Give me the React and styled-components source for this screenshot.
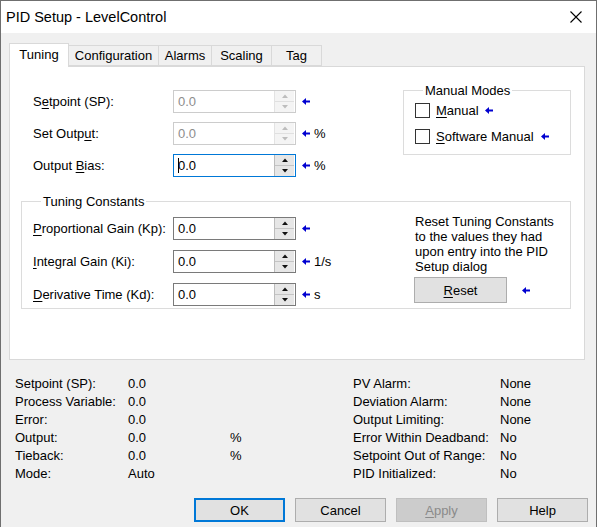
import React from 'react';
import styled, { createGlobalStyle } from 'styled-components';

const GlobalStyle = createGlobalStyle`
	html, body {
		margin: 0;
		padding: 0;
		background: #f0f0f0;
	}
`;

function BlueArrow() {
	return (
		<svg width="8" height="7" viewBox="0 0 8 7">
			<polygon points="0,3.5 4,0 4,7" fill="#0000d0" />
			<rect x="3" y="2.5" width="5" height="2" fill="#0000d0" />
		</svg>
	);
}

function Triangle({ up, color }) {
	return (
		<svg width="6" height="4" viewBox="0 0 6 4">
			<polygon points={up ? '0,4 3,0.5 6,4' : '0,0 6,0 3,3.5'} fill={color} />
		</svg>
	);
}

function SpinBox({ value, disabled, focused }) {
	const tri = disabled ? '#bdbdbd' : '#111';
	return (
		<Spin $disabled={disabled} $focused={focused}>
			<SpinText $disabled={disabled}>
				{focused && <Caret />}
				{value}
			</SpinText>
			<SpinButtons $disabled={disabled}>
				<SpinHalf $disabled={disabled}>
					<Triangle up color={tri} />
				</SpinHalf>
				<SpinHalf $disabled={disabled} $bottom>
					<Triangle color={tri} />
				</SpinHalf>
			</SpinButtons>
		</Spin>
	);
}

function FormRow({ label, value, unit, disabled, focused }) {
	return (
		<Row>
			<Label>{label}</Label>
			<SpinBox value={value} disabled={disabled} focused={focused} />
			<ArrowWrap>
				<BlueArrow />
			</ArrowWrap>
			{unit && <Unit>{unit}</Unit>}
		</Row>
	);
}

export default function App() {
	return (
		<>
			<GlobalStyle />
			<Window>
				<TitleBar>
					<Title>PID Setup - LevelControl</Title>
					<svg width="12" height="12" viewBox="0 0 12 12">
						<path d="M0.5 0.5 L11.5 11.5 M11.5 0.5 L0.5 11.5" stroke="#000" strokeWidth="1.1" />
					</svg>
				</TitleBar>
				<Body>
					<TabStrip>
						<Tab $active $width={60}>Tuning</Tab>
						<Tab $width={90}>Configuration</Tab>
						<Tab $width={53}>Alarms</Tab>
						<Tab $width={60}>Scaling</Tab>
						<Tab $width={50}>Tag</Tab>
					</TabStrip>
					<Panel>
						<TopSection>
							<TopForm>
								<FormRow
									label={<>S<U>e</U>tpoint (SP):</>}
									value="0.0"
									disabled
								/>
								<FormRow
									label={<>Set Outp<U>u</U>t:</>}
									value="0.0"
									unit="%"
									disabled
								/>
								<FormRow
									label={<>Output <U>B</U>ias:</>}
									value="0.0"
									unit="%"
									focused
								/>
							</TopForm>
							<ManualBox>
								<Legend>Manual Modes</Legend>
								<Checks>
									<CheckRow>
										<CheckBox />
										<CheckLabel><U>M</U>anual</CheckLabel>
										<ArrowWrap $gap={6}>
											<BlueArrow />
										</ArrowWrap>
									</CheckRow>
									<CheckRow>
										<CheckBox />
										<CheckLabel><U>S</U>oftware Manual</CheckLabel>
										<ArrowWrap $gap={7}>
											<BlueArrow />
										</ArrowWrap>
									</CheckRow>
								</Checks>
							</ManualBox>
						</TopSection>
						<TuningBox>
							<Legend>Tuning Constants</Legend>
							<TuningInner>
								<Form $gap={10}>
									<FormRow label={<><U>P</U>roportional Gain (Kp):</>} value="0.0" />
									<FormRow label={<><U>I</U>ntegral Gain (Ki):</>} value="0.0" unit="1/s" />
									<FormRow label={<><U>D</U>erivative Time (Kd):</>} value="0.0" unit="s" />
								</Form>
								<ResetColumn>
									<ResetText>
										Reset Tuning Constants to the values they had upon entry into the PID Setup dialog
									</ResetText>
									<ResetRow>
										<Button $width={93} $height={26}>
											<U>R</U>eset
										</Button>
										<ArrowWrap $gap={15}>
											<BlueArrow />
										</ArrowWrap>
									</ResetRow>
								</ResetColumn>
							</TuningInner>
						</TuningBox>
					</Panel>
				</Body>
				<Status>
					<StatusGrid $cols="113px 102px 40px" $width={338}>
						<span>Setpoint (SP):</span><span>0.0</span><span />
						<span>Process Variable:</span><span>0.0</span><span />
						<span>Error:</span><span>0.0</span><span />
						<span>Output:</span><span>0.0</span><span>%</span>
						<span>Tieback:</span><span>0.0</span><span>%</span>
						<span>Mode:</span><span>Auto</span><span />
					</StatusGrid>
					<StatusGrid $cols="147px auto">
						<span>PV Alarm:</span><span>None</span>
						<span>Deviation Alarm:</span><span>None</span>
						<span>Output Limiting:</span><span>None</span>
						<span>Error Within Deadband:</span><span>No</span>
						<span>Setpoint Out of Range:</span><span>No</span>
						<span>PID Initialized:</span><span>No</span>
					</StatusGrid>
				</Status>
				<ButtonBar>
					<Button $primary>OK</Button>
					<Button>Cancel</Button>
					<Button disabled>
						<U>A</U>pply
					</Button>
					<Button>Help</Button>
				</ButtonBar>
			</Window>
		</>
	);
}

const Window = styled.div`
	width: 597px;
	height: 527px;
	box-sizing: border-box;
	border: 1px solid #6f6f6f;
	border-bottom: none;
	background: #f0f0f0;
	display: flex;
	flex-direction: column;
	font-family: 'Liberation Sans', Arial, sans-serif;
	font-size: 13px;
	color: #000;
	overflow: hidden;
`;

const TitleBar = styled.div`
	height: 32px;
	flex-shrink: 0;
	background: #fff;
	display: flex;
	align-items: center;
	justify-content: space-between;
	padding: 0 14px 0 5px;
`;

const Title = styled.div`
	font-size: 14.5px;
`;

const Body = styled.div`
	display: flex;
	flex-direction: column;
	padding: 10px 11px 0 8px;
`;

const TabStrip = styled.div`
	display: flex;
	align-items: flex-end;
`;

const Tab = styled.div`
	width: ${(p) => p.$width}px;
	height: ${(p) => (p.$active ? 24 : 21)}px;
	box-sizing: border-box;
	display: flex;
	align-items: center;
	justify-content: center;
	padding-bottom: ${(p) => (p.$active ? 3 : 0)}px;
	border: 1px solid #d9d9d9;
	border-bottom: ${(p) => (p.$active ? 'none' : '1px solid #d9d9d9')};
	border-left: ${(p) => (p.$active ? '1px solid #d9d9d9' : 'none')};
	background: ${(p) => (p.$active ? '#fff' : '#f0f0f0')};
	margin-bottom: ${(p) => (p.$active ? -1 : 0)}px;
	position: relative;
	z-index: ${(p) => (p.$active ? 1 : 0)};
`;

const Panel = styled.div`
	width: 576px;
	height: 294px;
	box-sizing: border-box;
	background: #fff;
	border: 1px solid #d9d9d9;
	padding: 16px 13px 0 11px;
`;

const TopSection = styled.div`
	display: flex;
	justify-content: space-between;
	align-items: flex-start;
`;

const Form = styled.div`
	display: flex;
	flex-direction: column;
	gap: ${(p) => p.$gap || 9}px;
`;

const TopForm = styled(Form)`
	margin: 7px 0 0 12px;
`;

const Row = styled.div`
	display: flex;
	align-items: center;
	height: 23px;
`;

const Label = styled.div`
	width: 140px;
	white-space: nowrap;
`;

const U = styled.span`
	text-decoration: underline;
	text-underline-offset: 2px;
`;

const Spin = styled.div`
	width: 123px;
	height: 23px;
	box-sizing: border-box;
	display: flex;
	background: #fff;
	border: 1px solid
		${(p) => (p.$focused ? '#0078d7' : p.$disabled ? '#cccccc' : '#7a7a7a')};
`;

const SpinText = styled.div`
	flex: 1;
	display: flex;
	align-items: center;
	padding-left: 4px;
	color: ${(p) => (p.$disabled ? '#8d8d8d' : '#000')};
`;

const Caret = styled.span`
	display: inline-block;
	width: 1px;
	height: 15px;
	background: #000;
	margin-right: -1px;
`;

const SpinButtons = styled.div`
	width: 19px;
	margin: 0 1px 0 0;
	display: flex;
	flex-direction: column;
	border-left: 1px solid ${(p) => (p.$disabled ? '#e3e3e3' : '#bcbcbc')};
`;

const SpinHalf = styled.div`
	flex: 1;
	display: flex;
	align-items: center;
	justify-content: center;
	background: ${(p) => (p.$disabled ? '#f4f4f4' : '#e6e6e6')};
	border-top: ${(p) =>
		p.$bottom ? `1px solid ${p.$disabled ? '#e0e0e0' : '#c4c4c4'}` : 'none'};
`;

const ArrowWrap = styled.span`
	display: flex;
	align-items: center;
	margin-left: ${(p) => p.$gap || 6}px;
`;

const Unit = styled.span`
	margin-left: 4px;
`;

const Fieldset = styled.fieldset`
	margin: 0;
	min-width: 0;
	border: 1px solid #dcdcdc;
`;

const Legend = styled.legend`
	padding: 0 2px;
	margin-left: 8px;
	line-height: 15px;
`;

const ManualBox = styled(Fieldset)`
	width: 168px;
	box-sizing: border-box;
	padding: 5px 0 10px 11px;
`;

const Checks = styled.div`
	display: flex;
	flex-direction: column;
	gap: 11px;
`;

const CheckRow = styled.div`
	display: flex;
	align-items: center;
	height: 15px;
`;

const CheckBox = styled.span`
	width: 13px;
	height: 13px;
	border: 1px solid #333;
	background: #fff;
`;

const CheckLabel = styled.span`
	margin-left: 6px;
`;

const TuningBox = styled(Fieldset)`
	margin-top: 17px;
	padding: 8px 0 2px 11px;
`;

const TuningInner = styled.div`
	display: flex;
	align-items: flex-start;
`;

const ResetColumn = styled.div`
	margin-left: auto;
	width: 155px;
	margin-top: -3px;
	display: flex;
	flex-direction: column;
`;

const ResetText = styled.div`
	line-height: 15px;
	width: 148px;
`;

const ResetRow = styled.div`
	display: flex;
	align-items: center;
	margin: 3px 0 0 -1px;
`;

const Button = styled.button`
	width: ${(p) => p.$width || 91}px;
	height: ${(p) => p.$height || 24}px;
	box-sizing: border-box;
	font-family: inherit;
	font-size: 13px;
	padding: 0;
	color: ${(p) => (p.disabled ? '#8a8a8a' : '#000')};
	background: ${(p) => (p.disabled ? '#cccccc' : '#e1e1e1')};
	border: 1px solid
		${(p) => (p.$primary ? '#0078d7' : p.disabled ? '#bfbfbf' : '#adadad')};
	box-shadow: ${(p) => (p.$primary ? 'inset 0 0 0 1px #0078d7' : 'none')};
`;

const Status = styled.div`
	display: flex;
	margin-top: 15px;
	padding-left: 14px;
`;

const StatusGrid = styled.div`
	display: grid;
	grid-template-columns: ${(p) => p.$cols};
	width: ${(p) => (p.$width ? `${p.$width}px` : 'auto')};
	line-height: 18px;
	white-space: nowrap;
`;

const ButtonBar = styled.div`
	display: flex;
	justify-content: flex-end;
	gap: 10px;
	margin-top: 15px;
	padding-right: 8px;
`;
